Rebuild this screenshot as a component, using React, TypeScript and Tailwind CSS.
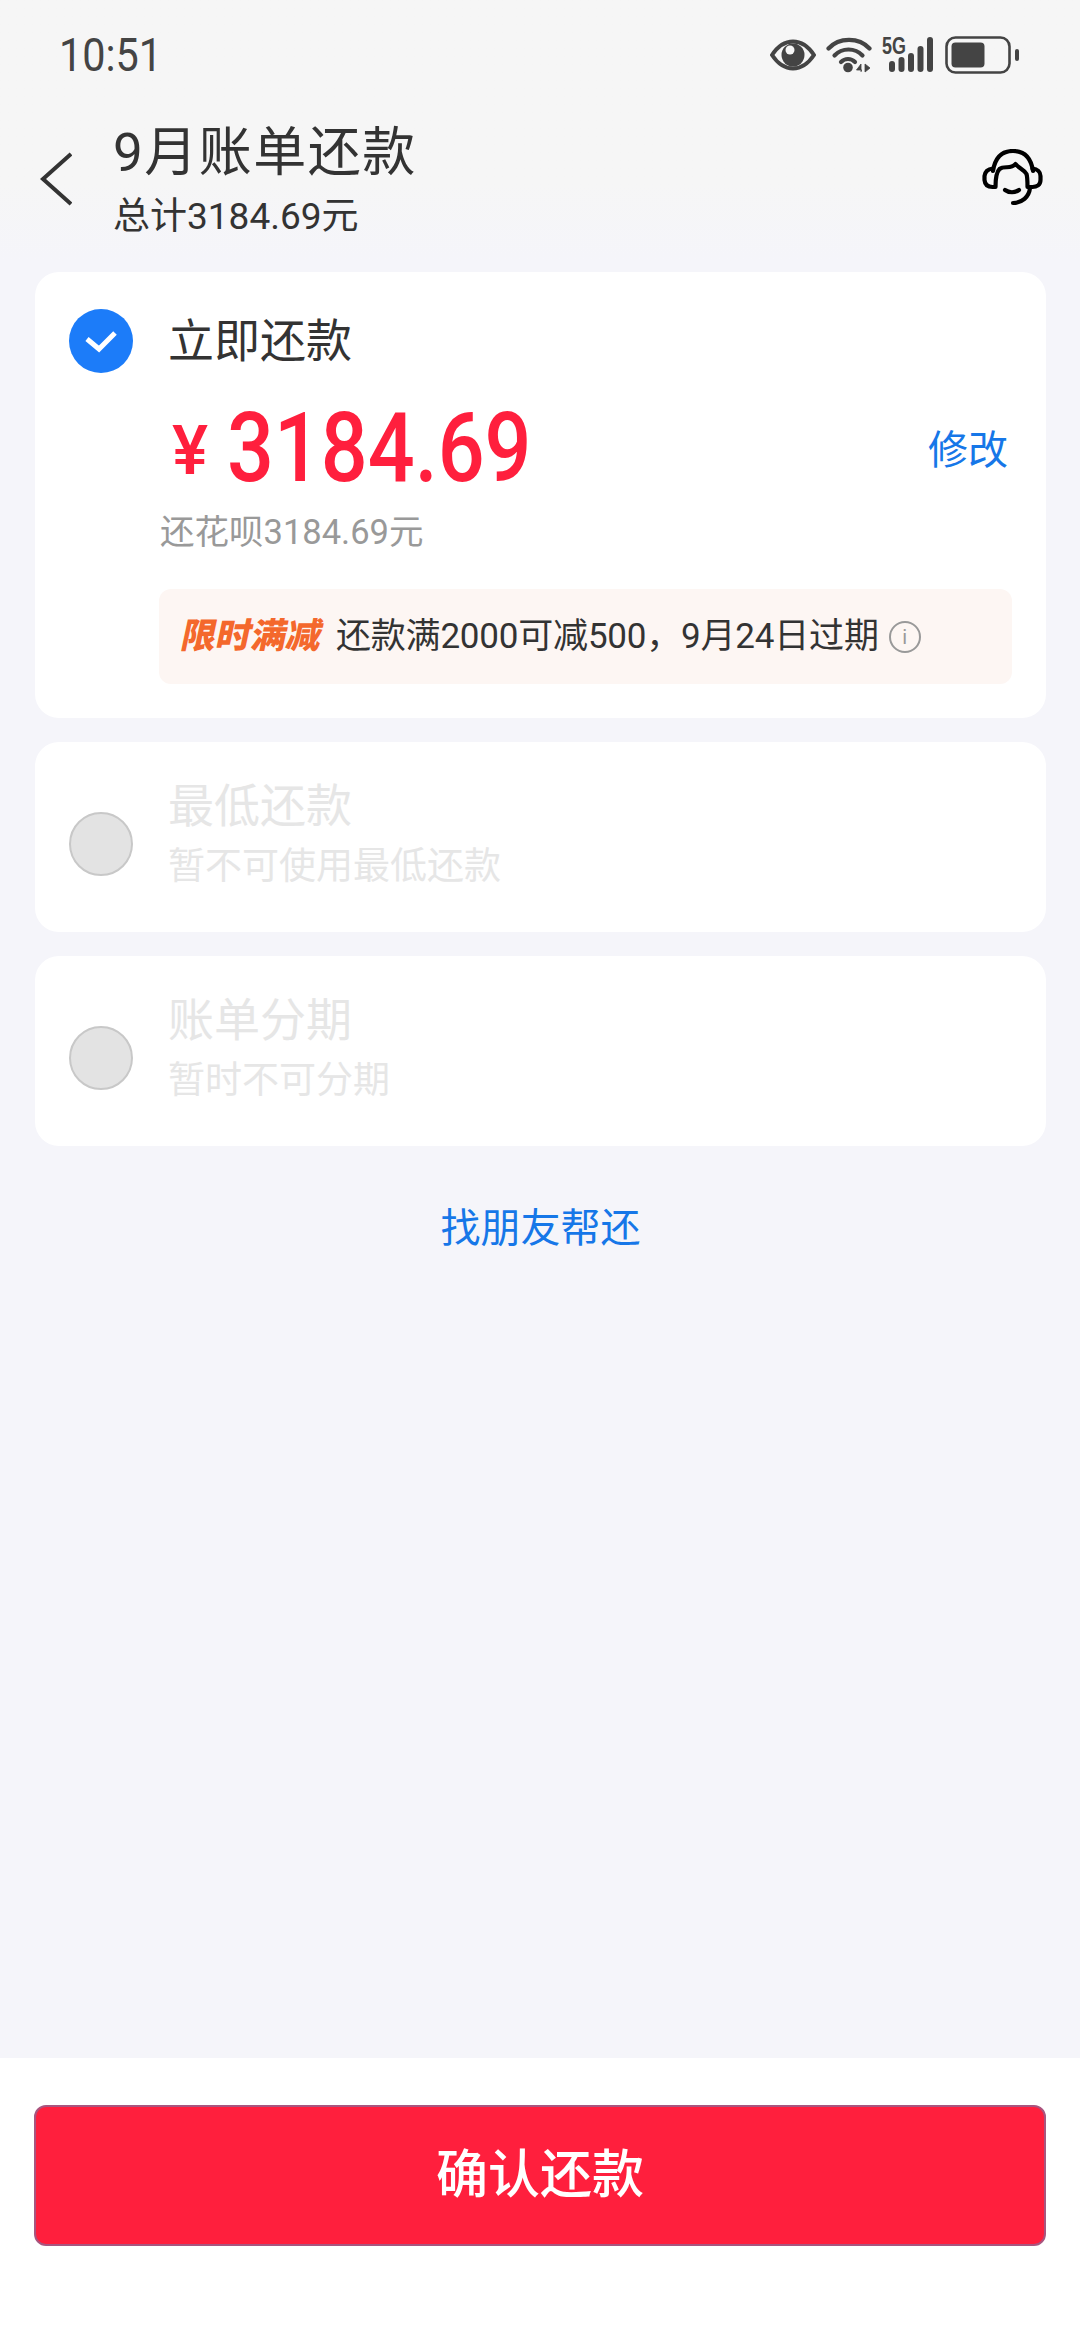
import React from "react";

const FONT = "font-['Roboto','Noto_Sans_CJK_SC',sans-serif]";

function Eye() {
  return (
    <svg width="46" height="32" viewBox="0 0 46 32" fill="none">
      <path d="M2 16C8 7 15 2.500 23 2.500S38 7 44 16c-6 9-13 13.500-21 13.500S8 25 2 16Z" stroke="#444" strokeWidth="4" fill="none" />
      <circle cx="23" cy="16" r="11.500" fill="#444" />
      <circle cx="20" cy="11" r="4.500" fill="#f6f6f6" />
    </svg>
  );
}

function Wifi() {
  return (
    <svg width="46" height="36" viewBox="0 0 46 36" fill="none">
      <path d="M2.500 11.500C13 0 33 0 43.500 11.500" stroke="#444" strokeWidth="4.200" strokeLinecap="round" />
      <path d="M8.500 18.500C16 10.500 29 10.500 36.500 18.500" stroke="#444" strokeWidth="4.200" strokeLinecap="round" />
      <path d="M15 25C19 21 25 21 29 25" stroke="#444" strokeWidth="4.200" strokeLinecap="round" />
      <circle cx="22" cy="30.500" r="4.800" fill="#444" />
      <path d="M35 35v-8l-4.500 6H36M39 27v8l5-4z" fill="#444" stroke="#444" strokeWidth="0.800" />
    </svg>
  );
}

function Signal() {
  return (
    <div className="relative w-[52px] h-[36px]">
      <span className="absolute left-0 top-[-2px] inline-block origin-left scale-x-[0.78] text-[23px] leading-[22px] font-bold text-[#444] font-['Liberation_Sans',sans-serif]">5G</span>
      <svg className="absolute left-0 top-0" width="52" height="36" viewBox="0 0 52 36" fill="#444">
        <rect x="7" y="24" width="6" height="11" rx="3" />
        <rect x="16.500" y="20" width="6" height="15" rx="3" />
        <rect x="26" y="16" width="6" height="19" rx="3" />
        <rect x="35.500" y="9" width="6" height="26" rx="3" />
        <rect x="45" y="0" width="6" height="35" rx="3" />
      </svg>
    </div>
  );
}

function Battery() {
  return (
    <svg width="74" height="38" viewBox="0 0 74 38" fill="none">
      <rect x="1.500" y="1.500" width="63" height="35" rx="9" stroke="#444" strokeWidth="2.600" />
      <rect x="6.500" y="6.500" width="33" height="25" rx="4" fill="#444" />
      <rect x="70" y="13" width="4" height="12" rx="2" fill="#444" />
    </svg>
  );
}

function Headset() {
  return (
    <svg width="62" height="58" viewBox="0 0 62 58" fill="none" stroke="#000" strokeWidth="4.200" strokeLinecap="round" strokeLinejoin="round">
      <path d="M11 22C13 9 20 2 31 2s18 7 20 20" />
      <path d="M11 19.500C6 20 3 23 2.500 27v4c.5 5 4 7 8 7h3c0-8 1-15 4-18 5-4 11 1 16-5 3 4 8 5 11 10 1 3 1 8 1 13h5c4 0 8-2 8-7v-4c0-4-3-7-8-7.500" />
      <path d="M23 41c4 3 10 3 14 0" />
      <path d="M48 39c-1 9-8 15-17 15" />
    </svg>
  );
}

function Money() {
  return (
    <div className="h-[92px] flex items-center">
      <span className="text-[68px] leading-none font-medium text-[#ff1f3d] w-[55px] mt-[6px]">¥</span>
      <span className="inline-block origin-left scale-x-[0.86] text-[96px] leading-none font-medium text-[#ff1f3d]">3184.69</span>
    </div>
  );
}

export default function App() {
  return (
    <div className={`${FONT} w-[1080px] h-[2340px] bg-[#f5f5fa] flex flex-col overflow-hidden`}>
      <header className="bg-linear-to-b from-[#f6f6f6] from-[70%] to-[#f5f5fa] h-[262px] shrink-0 flex flex-col">
        <div className="h-[110px] pl-[59px] pr-[61px] flex items-center justify-between">
          <span className="inline-block origin-left scale-x-[0.9] text-[46px] leading-none text-[#444]">10:51</span>
          <div className="flex items-center">
            <Eye />
            <div className="w-[10px]" />
            <Wifi />
            <div className="w-[10px]" />
            <Signal />
            <div className="w-[11px]" />
            <Battery />
          </div>
        </div>
        <div className="flex items-start pl-[40px] pr-[36px]">
          <svg className="mt-[42px] w-[32px] h-[54px]" viewBox="0 0 32 54" fill="none" stroke="#333" strokeWidth="4">
            <path d="M31 2 3 27l28 25" />
          </svg>
          <div className="ml-[41px] flex-1">
            <div className="text-[53px] leading-[60px] text-[#333] tracking-[1.500px] mt-[13px]">9月账单还款</div>
            <div className="text-[37px] leading-[44px] text-[#333] mt-[12px]">总计3184.69元</div>
          </div>
          <div className="mt-[39px]"><Headset /></div>
        </div>
      </header>

      <main className="flex-1 flex flex-col pl-[35px] pr-[34px] pt-[10px] gap-[24px]">
        <section className="bg-white rounded-[24px] h-[446px] pt-[34px] pl-[34px] pr-[34px] flex flex-col">
          <div className="flex items-center h-[70px]">
            <div className="w-[64px] h-[64px] rounded-full bg-[#1c7cf9] flex items-center justify-center">
              <svg width="34" height="24" viewBox="0 0 34 24" fill="none" stroke="#fff" strokeWidth="5">
                <path d="M3 10l12 10L31 4" />
              </svg>
            </div>
            <span className="ml-[35px] text-[46px] leading-none text-[#333]">立即还款</span>
          </div>
          <div className="flex items-center justify-between ml-[103px] mt-[26px]">
            <Money />
            <span className="text-[40px] leading-none text-[#1677e8] mr-[4px] mt-[5px]">修改</span>
          </div>
          <div className="ml-[91px] mt-[16px] text-[34.500px] leading-[44px] text-[#999]">还花呗3184.69元</div>
          <div className="ml-[90px] mt-[35px] h-[95px] bg-[#fdf6f3] rounded-[12px] flex items-center pl-[23px]">
            <span className="inline-block -skew-x-12 text-[35px] leading-none font-black text-[#f4682c] w-[154px]">限时满减</span>
            <span className="text-[35px] leading-none text-[#333] tracking-[-0.200px]">还款满2000可减500，9月24日过期</span>
            <span className="ml-[10px] w-[32px] h-[32px] rounded-full border-2 border-[#999] flex items-center justify-center text-[20px] leading-none text-[#999]">i</span>
          </div>
        </section>

        <Disabled title="最低还款" sub="暂不可使用最低还款" />
        <Disabled title="账单分期" sub="暂时不可分期" />

        <div className="mt-[31px] text-center text-[40px] leading-[56px] text-[#1677e8]">找朋友帮还</div>
      </main>

      <footer className="bg-white h-[282px] shrink-0 px-[34px] pt-[47px]">
        <button className="w-full h-[141px] rounded-[12px] bg-[#ff1f3d] border-2 border-[#a8557f] text-white text-[52px] font-medium leading-none">
          确认还款
        </button>
      </footer>
    </div>
  );
}

function Disabled({ title, sub }: { title: string; sub: string }) {
  return (
    <section className="bg-white rounded-[24px] h-[190px] pl-[34px] flex items-center">
      <div className="w-[64px] h-[64px] rounded-full bg-[#e3e3e3] border-2 border-[#c8c8c8] mt-[14px]" />
      <div className="ml-[35px] pb-[6px]">
        <div className="text-[46px] leading-[54px] text-[#e6e6e6]">{title}</div>
        <div className="text-[37px] leading-[46px] text-[#e6e6e6] mt-[11px]">{sub}</div>
      </div>
    </section>
  );
}
